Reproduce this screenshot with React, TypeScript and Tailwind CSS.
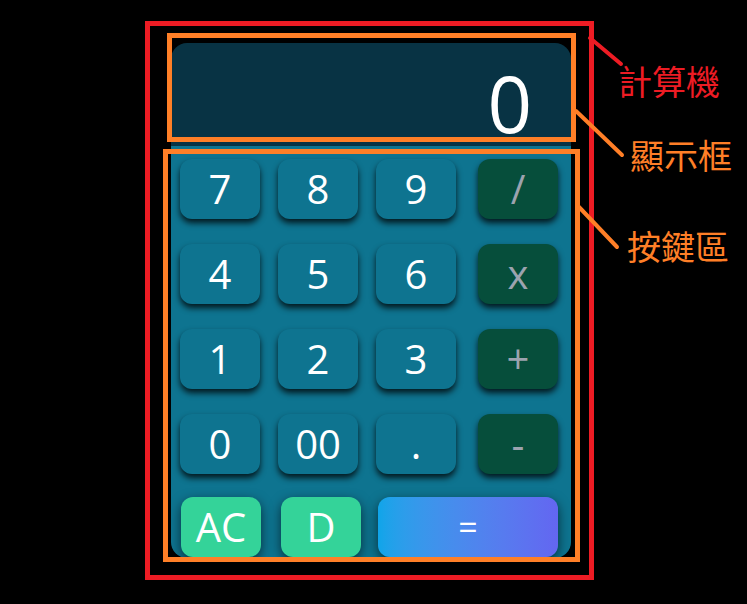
import React from 'react';

const rows = [
  ['7', '8', '9', '/'],
  ['4', '5', '6', 'x'],
  ['1', '2', '3', '+'],
  ['0', '00', '.', '-'],
];

function Key({ label, op }: { label: string; op?: boolean }) {
  return (
    <button
      className={
        'w-[80px] h-[60px] rounded-xl flex items-center justify-center text-[40px] leading-none shadow-[0_4px_6px_rgba(0,0,0,0.8)] ' +
        (op ? 'bg-[#064e3b] text-[#9ca3af] ml-[4px]' : 'bg-[#0e7490] text-white')
      }
    >
      {label}
    </button>
  );
}

export default function App() {
  return (
    <div
      className="relative w-[747px] h-[604px] bg-black overflow-hidden"
      style={{ fontFamily: '"Open Sans", "Noto Sans", sans-serif' }}
    >
      {/* 計算機 outline */}
      <div className="ml-[145px] mt-[21px] w-[449px] h-[559px] border-[5px] border-[#ed1c24] pl-[21px] pt-[17px]">
        <div className="w-[400px]">
          {/* display */}
          <div className="h-[103px] rounded-t-2xl bg-[#083344] flex items-end justify-end pr-[39px] pb-[4px]">
            <span className="text-[78px] leading-none text-white">0</span>
          </div>

          {/* keypad */}
          <div className="h-[412px] rounded-b-2xl bg-[#0e7490] overflow-hidden pt-[13px] flex flex-col">
            {rows.map((r, i) => (
              <div key={i} className={'flex gap-[18px] pl-[9px] ' + (i === 3 ? 'mb-[23px]' : 'mb-[25px]')}>
                {r.map((k, j) => (
                  <Key key={k} label={k} op={j === 3} />
                ))}
              </div>
            ))}
            <div className="flex pl-[10px]">
              <button className="w-[80px] h-[60px] rounded-xl bg-[#34d399] text-white text-[40px] leading-none flex items-center justify-center shadow-[0_4px_12px_rgba(0,0,0,0.6)]">
                AC
              </button>
              <button className="ml-[20px] w-[80px] h-[60px] rounded-xl bg-[#34d399] text-white text-[40px] leading-none flex items-center justify-center shadow-[0_4px_12px_rgba(0,0,0,0.6)]">
                D
              </button>
              <button className="ml-[17px] w-[180px] h-[60px] rounded-xl bg-gradient-to-r from-[#0ea5e9] to-[#6366f1] text-white text-[34px] leading-none flex items-center justify-center shadow-[0_4px_12px_rgba(0,0,0,0.6)]">
                =
              </button>
            </div>
          </div>
        </div>
      </div>

      {/* annotation boxes */}
      <div className="absolute left-[167px] top-[33px] w-[409px] h-[109px] border-[5px] border-[#ff7f27]" />
      <div className="absolute left-[163px] top-[149px] w-[417px] h-[413px] border-[5px] border-[#ff7f27]" />

      {/* leader lines */}
      <svg className="absolute left-0 top-0" width="747" height="604">
        <line x1="590" y1="38" x2="621" y2="64" stroke="#ed1c24" strokeWidth="4" strokeLinecap="round" />
        <line x1="576" y1="111" x2="622" y2="155" stroke="#ff7f27" strokeWidth="4" strokeLinecap="round" />
        <line x1="579" y1="207" x2="617" y2="247" stroke="#ff7f27" strokeWidth="4" strokeLinecap="round" />
      </svg>

      {/* labels */}
      <div
        className="absolute left-[618px] top-[64px] text-[34px] leading-none text-[#ed1c24]"
        style={{ fontFamily: '"Noto Sans CJK TC", "Noto Sans CJK SC", sans-serif' }}
      >
        計算機
      </div>
      <div
        className="absolute left-[630px] top-[138px] text-[34px] leading-none text-[#ff7f27]"
        style={{ fontFamily: '"Noto Sans CJK TC", "Noto Sans CJK SC", sans-serif' }}
      >
        顯示框
      </div>
      <div
        className="absolute left-[627px] top-[229px] text-[34px] leading-none text-[#ff7f27]"
        style={{ fontFamily: '"Noto Sans CJK TC", "Noto Sans CJK SC", sans-serif' }}
      >
        按鍵區
      </div>
    </div>
  );
}
